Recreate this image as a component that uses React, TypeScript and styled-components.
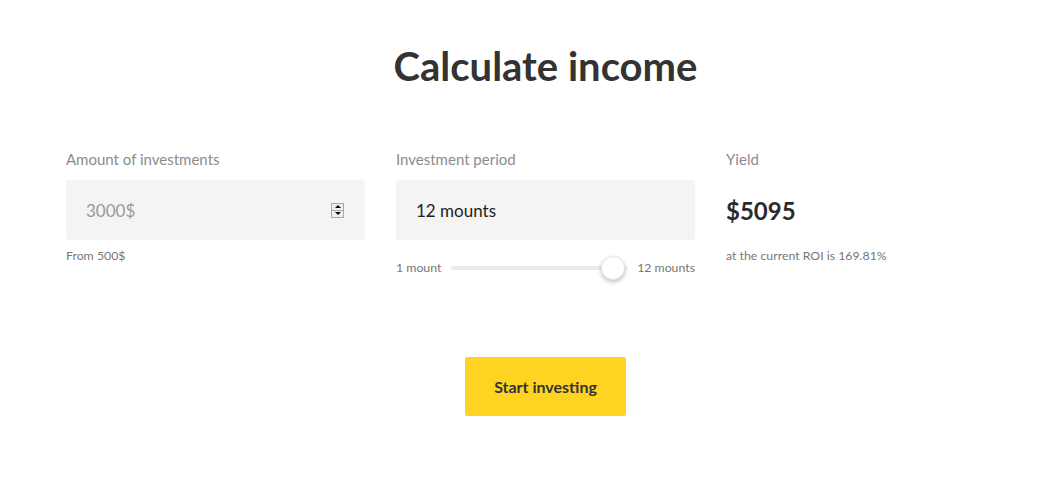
import React, { useState } from 'react'
import styled, { createGlobalStyle } from 'styled-components'

const GlobalStyle = createGlobalStyle`
  body {
    margin: 0;
    background: #fff;
    font-family: Lato, 'Open Sans', sans-serif;
    color: #333;
  }
`

const Section = styled.section`
  width: 959px;
  margin-left: 66px;
  padding-top: 40px;
  display: flex;
  flex-direction: column;
  align-items: center;
`

const Title = styled.h2`
  margin: 0;
  font-size: 40px;
  line-height: 52px;
  font-weight: 700;
  color: #333;
`

const Columns = styled.div`
  align-self: stretch;
  margin-top: 57px;
  display: grid;
  grid-template-columns: repeat(3, 1fr);
  column-gap: 31px;
`

const Column = styled.div`
  display: flex;
  flex-direction: column;
`

const Label = styled.div`
  font-size: 15px;
  line-height: 20px;
  color: #8c8c8c;
  margin-bottom: 11px;
`

const Field = styled.div`
  height: 60px;
  background: #f4f4f4;
  border-radius: 3px;
  display: flex;
  align-items: center;
  padding: 0 21px 0 20px;
`

const FieldValue = styled.span<{ $muted?: boolean }>`
  flex: 1;
  font-size: 17px;
  color: ${(p) => (p.$muted ? '#9a9a9a' : '#222')};
`

const Spinner = styled.div`
  width: 13px;
  height: 15px;
  border: 1px solid #a9a9a9;
  background: #efefef;
  display: flex;
  flex-direction: column;
  box-sizing: border-box;
`

const SpinHalf = styled.div<{ $up?: boolean }>`
  flex: 1;
  display: flex;
  align-items: center;
  justify-content: center;
  border-top: ${(p) => (p.$up ? 'none' : '1px solid #a9a9a9')};
  &::after {
    content: '';
    border-left: 3px solid transparent;
    border-right: 3px solid transparent;
    ${(p) => (p.$up ? 'border-bottom: 3px solid #000;' : 'border-top: 3px solid #000;')}
  }
`

const Note = styled.div`
  margin-top: 8px;
  font-size: 12.3px;
  line-height: 16px;
  color: #777;
`

const SliderRow = styled.div`
  margin-top: 20px;
  display: flex;
  align-items: center;
  gap: 10px;
  font-size: 12.3px;
  color: #777;
`

const Track = styled.div`
  flex: 1;
  position: relative;
  height: 4px;
  border-radius: 2px;
  background: #ececec;
`

const Thumb = styled.div`
  position: absolute;
  top: 50%;
  width: 24px;
  height: 24px;
  border-radius: 50%;
  background: #fff;
  border: 1px solid #e6e6e6;
  box-sizing: border-box;
  box-shadow: 0 2px 4px rgba(0, 0, 0, 0.25);
  transform: translate(-50%, -50%);
`

const Yield = styled.div`
  height: 60px;
  display: flex;
  align-items: center;
  font-size: 24px;
  font-weight: 700;
  color: #2b2b2b;
`

const Button = styled.button`
  margin-top: 82px;
  width: 161px;
  height: 59px;
  border: none;
  border-radius: 2px;
  background: #ffd322;
  font-family: inherit;
  font-size: 16px;
  font-weight: 700;
  color: #333;
  cursor: pointer;
`

export default function App() {
  const [months] = useState(12)
  const pos = ((months - 1) / 11) * 92

  return (
    <>
      <GlobalStyle />
      <Section>
        <Title>Calculate income</Title>
        <Columns>
          <Column>
            <Label>Amount of investments</Label>
            <Field>
              <FieldValue $muted>3000$</FieldValue>
              <Spinner>
                <SpinHalf $up />
                <SpinHalf />
              </Spinner>
            </Field>
            <Note>From 500$</Note>
          </Column>
          <Column>
            <Label>Investment period</Label>
            <Field>
              <FieldValue>{months} mounts</FieldValue>
            </Field>
            <SliderRow>
              <span>1 mount</span>
              <Track>
                <Thumb style={{ left: `${pos}%` }} />
              </Track>
              <span>{months} mounts</span>
            </SliderRow>
          </Column>
          <Column>
            <Label>Yield</Label>
            <Yield>$5095</Yield>
            <Note>at the current ROI is 169.81%</Note>
          </Column>
        </Columns>
        <Button>Start investing</Button>
      </Section>
    </>
  )
}
